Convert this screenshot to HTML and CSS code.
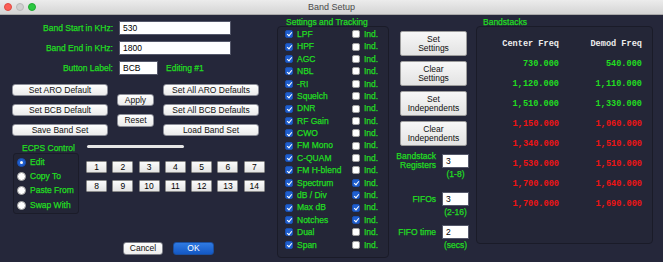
FILE: index.html
```html
<!DOCTYPE html>
<html>
<head>
<meta charset="utf-8">
<link rel="stylesheet" href="styles.css">
</head>
<body>
<div class="window">
  <div class="titlebar">
    <div class="lights"><span class="light red"></span><span class="light grey"></span><span class="light green"></span></div>
    <div class="title">Band Setup</div>
    <div></div>
  </div>
  <div class="content">
    <div class="left">
      <div class="form">
        <div class="frow"><label>Band Start in KHz:</label><div class="field w-long">530</div></div>
        <div class="frow"><label>Band End in KHz:</label><div class="field w-long">1800</div></div>
        <div class="frow"><label>Button Label:</label><div class="field w-short">BCB</div><span class="editing">Editing #1</span></div>
      </div>
      <div class="btns">
        <div class="bcol">
          <div class="btn wide">Set ARO Default</div>
          <div class="btn wide">Set BCB Default</div>
          <div class="btn wide">Save Band Set</div>
        </div>
        <div class="bcol mid">
          <div class="btn narrow">Apply</div>
          <div class="btn narrow">Reset</div>
        </div>
        <div class="bcol">
          <div class="btn wide">Set All ARO Defaults</div>
          <div class="btn wide">Set All BCB Defaults</div>
          <div class="btn wide">Load Band Set</div>
        </div>
      </div>
      <div class="ecps">
        <div class="ecps-left">
          <div class="ecps-title">ECPS Control</div>
          <div class="radio-box">
            <div class="rrow"><span class="rd on"></span><span class="rlbl">Edit</span></div>
            <div class="rrow"><span class="rd"></span><span class="rlbl">Copy To</span></div>
            <div class="rrow"><span class="rd"></span><span class="rlbl">Paste From</span></div>
            <div class="rrow"><span class="rd"></span><span class="rlbl">Swap With</span></div>
          </div>
        </div>
        <div class="ecps-right">
          <div class="slider"></div>
          <div class="numgrid">
            <div class="num">1</div><div class="num">2</div><div class="num">3</div><div class="num">4</div><div class="num">5</div><div class="num">6</div><div class="num">7</div>
            <div class="num">8</div><div class="num">9</div><div class="num">10</div><div class="num">11</div><div class="num">12</div><div class="num">13</div><div class="num">14</div>
          </div>
        </div>
      </div>
      <div class="dialog-btns">
        <div class="dbtn cancel">Cancel</div>
        <div class="dbtn ok">OK</div>
      </div>
    </div>

    <div class="settings">
      <div class="legend">Settings and Tracking</div>
      <div class="group sgroup">
        <div class="srow"><span class="cb on"></span><span class="lbl">LPF</span><span class="cb"></span><span class="ind">Ind.</span></div>
        <div class="srow"><span class="cb on"></span><span class="lbl">HPF</span><span class="cb"></span><span class="ind">Ind.</span></div>
        <div class="srow"><span class="cb on"></span><span class="lbl">AGC</span><span class="cb"></span><span class="ind">Ind.</span></div>
        <div class="srow"><span class="cb on"></span><span class="lbl">NBL</span><span class="cb"></span><span class="ind">Ind.</span></div>
        <div class="srow"><span class="cb on"></span><span class="lbl">-RI</span><span class="cb"></span><span class="ind">Ind.</span></div>
        <div class="srow"><span class="cb on"></span><span class="lbl">Squelch</span><span class="cb"></span><span class="ind">Ind.</span></div>
        <div class="srow"><span class="cb on"></span><span class="lbl">DNR</span><span class="cb"></span><span class="ind">Ind.</span></div>
        <div class="srow"><span class="cb on"></span><span class="lbl">RF Gain</span><span class="cb"></span><span class="ind">Ind.</span></div>
        <div class="srow"><span class="cb on"></span><span class="lbl">CWO</span><span class="cb"></span><span class="ind">Ind.</span></div>
        <div class="srow"><span class="cb on"></span><span class="lbl">FM Mono</span><span class="cb"></span><span class="ind">Ind.</span></div>
        <div class="srow"><span class="cb on"></span><span class="lbl">C-QUAM</span><span class="cb"></span><span class="ind">Ind.</span></div>
        <div class="srow"><span class="cb on"></span><span class="lbl">FM H-blend</span><span class="cb"></span><span class="ind">Ind.</span></div>
        <div class="srow"><span class="cb on"></span><span class="lbl">Spectrum</span><span class="cb on"></span><span class="ind">Ind.</span></div>
        <div class="srow"><span class="cb on"></span><span class="lbl">dB / Div</span><span class="cb on"></span><span class="ind">Ind.</span></div>
        <div class="srow"><span class="cb on"></span><span class="lbl">Max dB</span><span class="cb on"></span><span class="ind">Ind.</span></div>
        <div class="srow"><span class="cb on"></span><span class="lbl">Notches</span><span class="cb on"></span><span class="ind">Ind.</span></div>
        <div class="srow"><span class="cb on"></span><span class="lbl">Dual</span><span class="cb"></span><span class="ind">Ind.</span></div>
        <div class="srow"><span class="cb on"></span><span class="lbl">Span</span><span class="cb"></span><span class="ind">Ind.</span></div>
      </div>
    </div>

    <div class="actions">
      <div class="bigbtn">Set<br>Settings</div>
      <div class="bigbtn">Clear<br>Settings</div>
      <div class="bigbtn">Set<br>Independents</div>
      <div class="bigbtn">Clear<br>Independents</div>
      <div class="numrow reg"><label>Bandstack Registers</label><div class="field w-num">3</div></div>
      <div class="hint">(1-8)</div>
      <div class="numrow fifo"><label>FIFOs</label><div class="field w-num">3</div></div>
      <div class="hint h2">(2-16)</div>
      <div class="numrow fifotime"><label>FIFO time</label><div class="field w-num">2</div></div>
      <div class="hint h2">(secs)</div>
    </div>

    <div class="bandstacks">
      <div class="legend">Bandstacks</div>
      <div class="group bgroup">
        <div class="bs-grid">
          <div class="bs-head">Center Freq</div><div class="bs-head">Demod Freq</div>
          <div class="g">730.000</div><div class="g">540.000</div>
          <div class="g">1,120.000</div><div class="g">1,110.000</div>
          <div class="g">1,510.000</div><div class="g">1,330.000</div>
          <div class="r">1,150.000</div><div class="r">1,060.000</div>
          <div class="r">1,340.000</div><div class="r">1,510.000</div>
          <div class="r">1,530.000</div><div class="r">1,510.000</div>
          <div class="r">1,700.000</div><div class="r">1,640.000</div>
          <div class="r">1,700.000</div><div class="r">1,690.000</div>
        </div>
      </div>
    </div>
  </div>
</div>
</body>
</html>
```
FILE: styles.css
```css
* { box-sizing: border-box; margin: 0; padding: 0; }
html, body { width: 663px; height: 262px; overflow: hidden; }
body {
  margin: 0;
  background: #25273a;
  font-family: "Liberation Sans", Arial, sans-serif;
  font-size: 8.5px;
  line-height: 1;
  color: #22dd22;
  -webkit-text-stroke: 0.25px;
}
.window { width: 663px; height: 262px; display: flex; flex-direction: column; }

.titlebar {
  height: 15px; flex: none;
  background: linear-gradient(#ececec, #d4d4d4);
  border-bottom: 1px solid #a9a9a9;
  display: grid; grid-template-columns: 1fr auto 1fr; align-items: center;
  -webkit-text-stroke: 0;
}
.lights { display: flex; gap: 4px; padding-left: 4px; }
.light { width: 8px; height: 8px; border-radius: 50%; }
.light.red { background: #fc5f57; border: 0.5px solid #de4a42; }
.light.grey { background: #d0d0d0; border: 0.5px solid #b9b9b9; }
.light.green { background: #2ac840; border: 0.5px solid #1fa932; }
.title { color: #4a4a4a; font-size: 9px; }

.content { display: flex; flex: 1; align-items: flex-start; }

/* left column */
.left { width: 277px; flex: none; }
.form { padding-top: 6px; display: flex; flex-direction: column; gap: 6px; }
.frow { display: flex; align-items: center; height: 14px; }
.frow label { width: 113px; text-align: right; margin-right: 6px; }
.field {
  height: 14px; background: #fff; border: 1px solid #55586a;
  color: #000; padding-left: 3px; display: flex; align-items: center;
  -webkit-text-stroke: 0;
}
.w-long { width: 112px; }
.w-short { width: 39px; }
.editing { margin-left: 8px; }

.btns { margin-top: 9px; margin-left: 12px; display: flex; gap: 9px; }
.bcol { display: flex; flex-direction: column; gap: 8px; }
.bcol.mid { padding-top: 10px; }
.btn {
  height: 12px;
  background: linear-gradient(#fefefe, #ebebeb);
  border: 1px solid #8d8f99; border-radius: 3px;
  color: #111; display: flex; align-items: center; justify-content: center;
  white-space: nowrap; -webkit-text-stroke: 0;
}
.wide { width: 96px; }
.narrow { width: 37px; }
.bcol.mid .btn + .btn { height: 13px; }

.ecps { margin-top: 7px; display: flex; }
.ecps-left { margin-left: 13px; width: 66px; }
.ecps-title { padding-left: 9px; height: 10px; line-height: 10px; }
.radio-box {
  height: 61px; border: 1px solid #1b1c29; border-radius: 3px;
  background: #232536; padding: 1px 0 0 3px;
}
.rrow { height: 14.3px; display: flex; align-items: center; }
.rd { width: 9px; height: 9px; border-radius: 50%; background: #fff; border: 1px solid #a0a0a0; flex: none; }
.rd.on { background: #1f5fd0; border-color: #1a4fb0; display: flex; align-items: center; justify-content: center; }
.rd.on::after { content: ""; width: 3px; height: 3px; border-radius: 50%; background: #fff; }
.rlbl { margin-left: 4px; white-space: nowrap; }

.ecps-right { margin-left: 7px; }
.slider { width: 97px; height: 3px; background: #e6e6e6; border-radius: 2px; margin-left: 1px; margin-top: 2px; }
.numgrid {
  margin-top: 13px; display: grid;
  grid-template-columns: repeat(7, 21px); column-gap: 5.3px; row-gap: 7px;
}
.num {
  height: 12px; background: linear-gradient(#fbfbfb, #e4e4e4);
  border: 1px solid #8a8a8a; border-radius: 1px;
  color: #000; display: flex; align-items: center; justify-content: center;
  -webkit-text-stroke: 0;
}

.dialog-btns { margin-top: 28px; margin-left: 123px; display: flex; gap: 10px; }
.dbtn { height: 13px; border-radius: 3px; display: flex; align-items: center; justify-content: center; -webkit-text-stroke: 0; }
.cancel { width: 40px; background: linear-gradient(#fefefe, #ededed); border: 1px solid #7d7f88; color: #111; }
.ok { width: 41px; background: linear-gradient(#2f7ae2, #1458c4); border: 1px solid #1a4fa0; color: #fff; }

/* settings */
.settings { width: 112px; flex: none; }
.legend { height: 11px; padding-left: 9px; padding-top: 3px; line-height: 8px; white-space: nowrap; }
.group { border: 1px solid #1a1b28; border-radius: 4px; background: #242637; }
.sgroup { height: 232px; padding: 1px 0 0 7px; }
.srow { height: 12.4px; display: flex; align-items: center; }
.cb { width: 8px; height: 8px; border-radius: 2px; flex: none; background: #fff; border: 1px solid #a0a0a0; }
.cb.on { background: #1f5fd0; border-color: #1a4fb0; }
.cb.on::after {
  content: ""; display: block; width: 2px; height: 4px;
  border: solid #fff; border-width: 0 1.2px 1.2px 0;
  transform: rotate(40deg); margin: 0.3px auto 0;
}
.srow .lbl { margin-left: 4px; width: 55px; white-space: nowrap; }
.srow .ind { margin-left: 4px; }

/* actions */
.actions { margin-left: 3px; width: 78px; flex: none; padding-top: 16px; }
.bigbtn {
  margin-left: 8px; width: 67px; height: 25px; margin-bottom: 5px;
  background: linear-gradient(#f7f7f7, #e3e3e3);
  border: 1px solid #9c9c9c; border-radius: 2px;
  color: #111; line-height: 9px; text-align: center;
  display: flex; align-items: center; justify-content: center;
  -webkit-text-stroke: 0;
}
.bigbtn:nth-child(4) { margin-bottom: 0; }
.numrow { display: flex; align-items: center; }
.numrow label { width: 44px; text-align: right; line-height: 9px; margin-right: 6px; }
.w-num { width: 27px; }
.reg { height: 18px; margin-top: 6px; }
.fifo { height: 14px; margin-top: 13px; }
.fifotime { height: 14px; margin-top: 8px; }
.hint { margin-left: 50px; width: 27px; text-align: center; line-height: 9px; height: 9px; white-space: nowrap; }
.hint.h2 { margin-top: 2px; }

/* bandstacks */
.bandstacks { margin-left: 6px; width: 177px; flex: none; }
.bandstacks .legend { padding-left: 7px; }
.bgroup { height: 218px; padding-top: 8px; }
.bs-grid {
  display: grid; grid-template-columns: 82px 83px;
  grid-template-rows: 19px repeat(8, 20px);
  font-family: "Liberation Mono", monospace; font-size: 8.6px; font-weight: bold;
  text-align: right; -webkit-text-stroke: 0;
}
.bs-grid > div { line-height: 20px; white-space: nowrap; }
.bs-grid > .bs-head { line-height: 19px; color: #ececec; }
.g { color: #22dd22; }
.r { color: #ee1414; }
```
